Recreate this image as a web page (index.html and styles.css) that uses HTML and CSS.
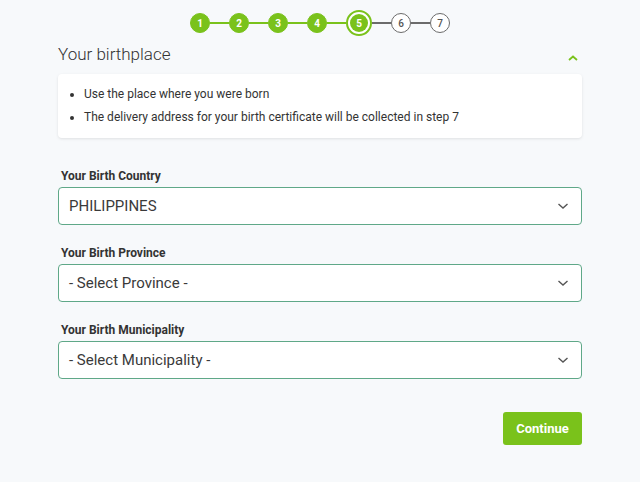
FILE: index.html
```html
<!DOCTYPE html>
<html>
<head>
    <meta charset="UTF-8">
    <title>Your birthplace</title>
    <link rel="stylesheet" href="styles.css">
</head>
<body>

<div class="steps">
    <span class="step done">1</span><span class="line done"></span>
    <span class="step done">2</span><span class="line done"></span>
    <span class="step done">3</span><span class="line done"></span>
    <span class="step done">4</span><span class="line done"></span>
    <span class="step cur"><span>5</span></span><span class="line"></span>
    <span class="step">6</span><span class="line"></span>
    <span class="step">7</span>
</div>

<div class="box">

    <div class="head">
        <h2>Your birthplace</h2>
        <svg class="toggle" width="12" height="8" viewBox="0 0 12 8"><path d="M2 6 L6 2.5 L10 6" fill="none" stroke="#7ac21b" stroke-width="1.8"/></svg>
    </div>

    <ul class="notes">
        <li>Use the place where you were born</li>
        <li>The delivery address for your birth certificate will be collected in step 7</li>
    </ul>

    <div class="field">
        <label>Your Birth Country</label>
        <div class="select">PHILIPPINES<svg width="12" height="8" viewBox="0 0 12 8"><path d="M1.5 2 L6 6 L10.5 2" fill="none" stroke="#555" stroke-width="1.4"/></svg></div>
    </div>

    <div class="field">
        <label>Your Birth Province</label>
        <div class="select">- Select Province -<svg width="12" height="8" viewBox="0 0 12 8"><path d="M1.5 2 L6 6 L10.5 2" fill="none" stroke="#555" stroke-width="1.4"/></svg></div>
    </div>

    <div class="field">
        <label>Your Birth Municipality</label>
        <div class="select">- Select Municipality -<svg width="12" height="8" viewBox="0 0 12 8"><path d="M1.5 2 L6 6 L10.5 2" fill="none" stroke="#555" stroke-width="1.4"/></svg></div>
    </div>

    <div class="actions">
        <a href="#" class="btn">Continue</a>
    </div>

</div>

</body>
</html>
```

FILE: styles.css
```css
* {
    margin: 0;
    padding: 0;
}

a {
    text-decoration: none;
}

ul {
    list-style: none;
}

body {
    font: 12px/1.5 Roboto, "Liberation Sans", sans-serif;
    background: #f7f9fb;
    color: #333;
}

/* progress steps */
.steps {
    display: flex;
    justify-content: center;
    align-items: center;
    padding-top: 10px;
    height: 26px;
}

.step {
    display: flex;
    justify-content: center;
    align-items: center;
    box-sizing: border-box;
    width: 20px;
    height: 20px;
    border: 1.5px solid #6b6b6b;
    border-radius: 50%;
    background: #fff;
    color: #555;
    font-size: 10px;
    font-weight: 500;
}

.step.done {
    border-color: #7ac21b;
    background: #7ac21b;
    color: #fff;
    font-weight: 700;
}

.step.cur {
    width: 26px;
    height: 26px;
    border: 2px solid #7ac21b;
    background: #fff;
}

.step.cur span {
    display: flex;
    justify-content: center;
    align-items: center;
    width: 18px;
    height: 18px;
    border-radius: 50%;
    background: #7ac21b;
    color: #fff;
    font-weight: 700;
}

.line {
    width: 19px;
    height: 1.5px;
    background: #6b6b6b;
}

.line.done {
    background: #7ac21b;
}

.box {
    width: 524px;
    margin: 0 auto;
}

.head {
    display: flex;
    justify-content: space-between;
    align-items: center;
    height: 38px;
}

.head h2 {
    font-size: 17px;
    font-weight: 300;
    color: #333;
}

.toggle {
    margin-right: 3px;
    margin-top: 6px;
}

.notes {
    background: #fff;
    border-radius: 4px;
    box-shadow: 0 1px 3px rgba(0, 0, 0, .1);
    padding: 9px 0 9px 26px;
    list-style: disc;
    font-size: 12px;
    line-height: 23px;
    color: #333;
}

.field {
    margin-top: 30px;
}

.field + .field {
    margin-top: 20px;
}

.field label {
    display: block;
    padding-left: 3px;
    font-weight: 700;
    font-size: 12px;
    color: #333;
    line-height: 16px;
    margin-bottom: 3px;
}

.select {
    display: flex;
    justify-content: space-between;
    align-items: center;
    box-sizing: border-box;
    height: 38px;
    padding: 0 12px 0 10px;
    border: 1.5px solid #5fa888;
    border-radius: 4px;
    background: #fff;
    font-size: 15px;
    color: #3a3a3a;
}

.actions {
    display: flex;
    justify-content: flex-end;
    margin-top: 33px;
}

.btn {
    display: block;
    width: 79px;
    height: 33px;
    line-height: 33px;
    border-radius: 3px;
    background: #7ac21b;
    color: #fff;
    text-align: center;
    font-size: 13px;
    font-weight: 700;
}
```
